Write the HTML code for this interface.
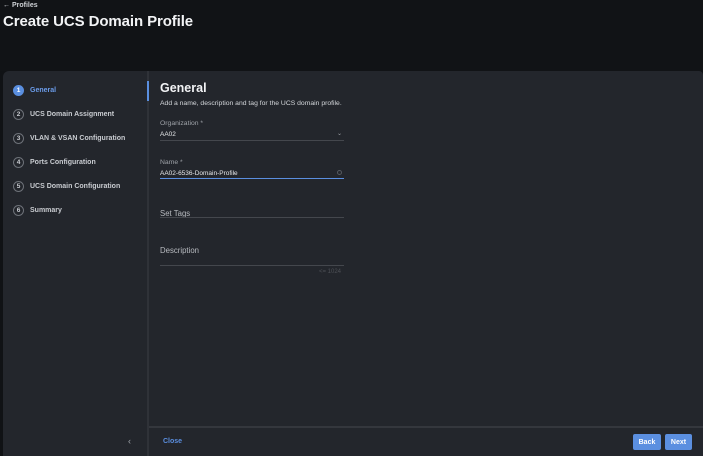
<!DOCTYPE html>
<html><head><meta charset="utf-8"><style>
*{margin:0;padding:0;box-sizing:border-box}
body{width:703px;height:456px;overflow:hidden;background:#101215;font-family:"Liberation Sans",sans-serif;color:#e6e8ea;position:relative}
.hdr{position:absolute;left:0;top:0;width:703px;height:71px;background:#111316}
.back{position:absolute;left:3px;top:2px;font-size:7px;font-weight:bold;color:#cfd2d6}
h1{position:absolute;left:3px;top:13px;font-size:15px;font-weight:bold;color:#f2f3f5;letter-spacing:-0.1px}
.panel{position:absolute;left:3px;top:71px;width:700px;height:385px;background:#23262c;border-top-left-radius:6px;border-top-right-radius:4px}
.side{position:absolute;left:0;top:0;width:146px;height:385px;border-right:2px solid #2f3238}
.step{position:absolute;left:10px;font-size:7px;font-weight:bold;color:#c9ccd1;display:flex;align-items:center}
.num{width:11px;height:11px;border-radius:50%;border:1px solid #6d7178;font-size:6.5px;display:flex;align-items:center;justify-content:center;margin-right:6px;color:#c9ccd1}
.act .num{background:#5a8fe0;border-color:#5a8fe0;color:#fff}
.act{color:#6b9cea}
.bar{position:absolute;left:144px;top:10px;width:2px;height:20px;background:#5a8fe0}
.main{position:absolute;left:157px}
.lbl{position:absolute;font-size:6.5px;color:#9ea2a8}
.val{position:absolute;font-size:6.5px;color:#e6e8ea}
.line{position:absolute;left:157px;width:184px;height:1px;background:#44474d}
.foot{position:absolute;left:146px;top:355px;width:554px;height:2px;background:#34373d}
.btn{position:absolute;top:363px;height:16px;background:#5b8fe0;color:#fff;font-size:7px;font-weight:bold;display:flex;align-items:center;justify-content:center;border-radius:2px}
</style></head><body>
<div class="hdr"><div class="back">← Profiles</div><h1>Create UCS Domain Profile</h1></div>
<div class="panel">
 <div class="side">
  <div class="step act" style="top:14px"><span class="num">1</span>General</div>
  <div class="step" style="top:38px"><span class="num">2</span>UCS Domain Assignment</div>
  <div class="step" style="top:62px"><span class="num">3</span>VLAN &amp; VSAN Configuration</div>
  <div class="step" style="top:86px"><span class="num">4</span>Ports Configuration</div>
  <div class="step" style="top:110px"><span class="num">5</span>UCS Domain Configuration</div>
  <div class="step" style="top:134px"><span class="num">6</span>Summary</div>
  <div style="position:absolute;left:125px;top:365px;font-size:9px;color:#9ea2a8">‹</div>
 </div>
 <div class="bar"></div>
 <div class="main" style="top:10px;font-size:12.5px;font-weight:bold;color:#f2f3f5">General</div>
 <div class="main" style="top:29px;font-size:6.8px;color:#d4d7db">Add a name, description and tag for the UCS domain profile.</div>
 <div class="lbl" style="left:157px;top:49px;font-size:6.8px">Organization *</div>
 <div class="val" style="left:157px;top:60px">AA02</div>
 <div style="position:absolute;left:334px;top:59px;font-size:6px;color:#9ea2a8">⌄</div>
 <div class="line" style="top:69px"></div>
 <div class="lbl" style="left:157px;top:88px;font-size:6.8px">Name *</div>
 <div class="val" style="left:157px;top:99px">AA02-6536-Domain-Profile</div>
 <div style="position:absolute;left:334px;top:99px;width:5px;height:5px;border:1px solid #555960;border-radius:50%"></div>
 <div class="line" style="top:107px;background:#5b8fe0"></div>
 <div class="val" style="left:157px;top:138px;font-size:7.8px;color:#b8bbc0">Set Tags</div>
 <div class="line" style="top:146px"></div>
 <div class="val" style="left:157px;top:175px;font-size:7.8px;color:#b8bbc0">Description</div>
 <div class="line" style="top:194px"></div>
 <div style="position:absolute;left:316px;top:198px;font-size:6px;color:#4d5056">&lt;= 1024</div>
 <div class="foot"></div>
 <div style="position:absolute;left:160px;top:367px;font-size:7px;font-weight:bold;color:#5b8fe0">Close</div>
 <div class="btn" style="left:630px;width:28px">Back</div>
 <div class="btn" style="left:662px;width:27px">Next</div>
</div>
</body></html>
